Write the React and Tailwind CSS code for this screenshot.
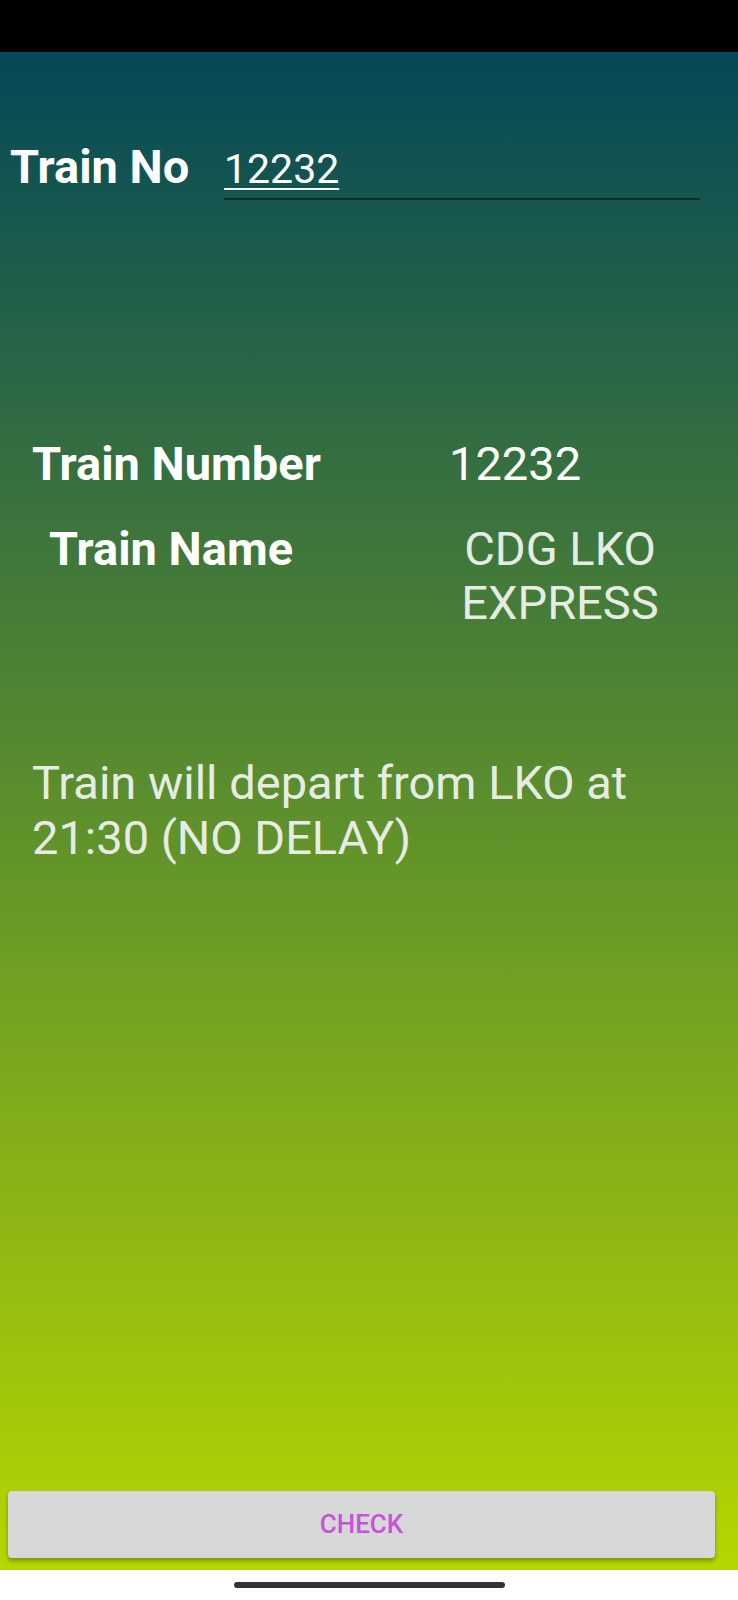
export default function App() {
  return (
    <div className="w-full h-[1600px] flex flex-col bg-white font-['Roboto',sans-serif]">
      {/* status bar */}
      <div className="h-[52px] bg-black shrink-0" />

      {/* screen */}
      <div className="h-[1518px] shrink-0 flex flex-col bg-[linear-gradient(to_bottom,#054858,#b5d700)]">
        {/* train no input */}
        <div className="flex items-baseline pt-[91px] pl-[10px]">
          <div className="w-[214px] text-[47px] leading-none font-bold text-white">Train No</div>
          <div className="w-[476px] pb-[8px] border-b-2 border-[#0f2b2b]">
            <span className="text-[41px] leading-none text-white underline decoration-2 underline-offset-[5px]">12232</span>
          </div>
        </div>

        {/* details */}
        <div className="flex items-baseline mt-[240px]">
          <div className="w-[449px] pl-[32px] text-[47px] leading-none font-bold text-white">Train Number</div>
          <div className="text-[47px] leading-none text-white">12232</div>
        </div>
        <div className="flex items-baseline mt-[35px]">
          <div className="w-[449px] pl-[49px] text-[47px] leading-none font-bold text-white">Train Name</div>
          <div className="w-[222px] text-center text-[47px] leading-[54px] text-[#e6ece4]">CDG LKO EXPRESS</div>
        </div>

        <p className="mt-[125px] pl-[32px] text-[47px] leading-[55px] text-[#e6ece4]">
          Train will depart from LKO at
          <br />
          21:30 (NO DELAY)
        </p>

        {/* button */}
        <div className="mt-auto pb-[12px] pl-[8px] pr-[23px]">
          <button className="w-full h-[67px] rounded-[4px] bg-[#d6d8d8] shadow-[0_3px_4px_rgba(0,0,0,0.3)] text-[26px] font-medium text-[#c653d8] uppercase">
            Check
          </button>
        </div>
      </div>

      {/* nav bar */}
      <div className="flex-1 flex justify-center pt-[12px]">
        <div className="w-[271px] h-[6px] rounded-full bg-[#333333]" />
      </div>
    </div>
  );
}
